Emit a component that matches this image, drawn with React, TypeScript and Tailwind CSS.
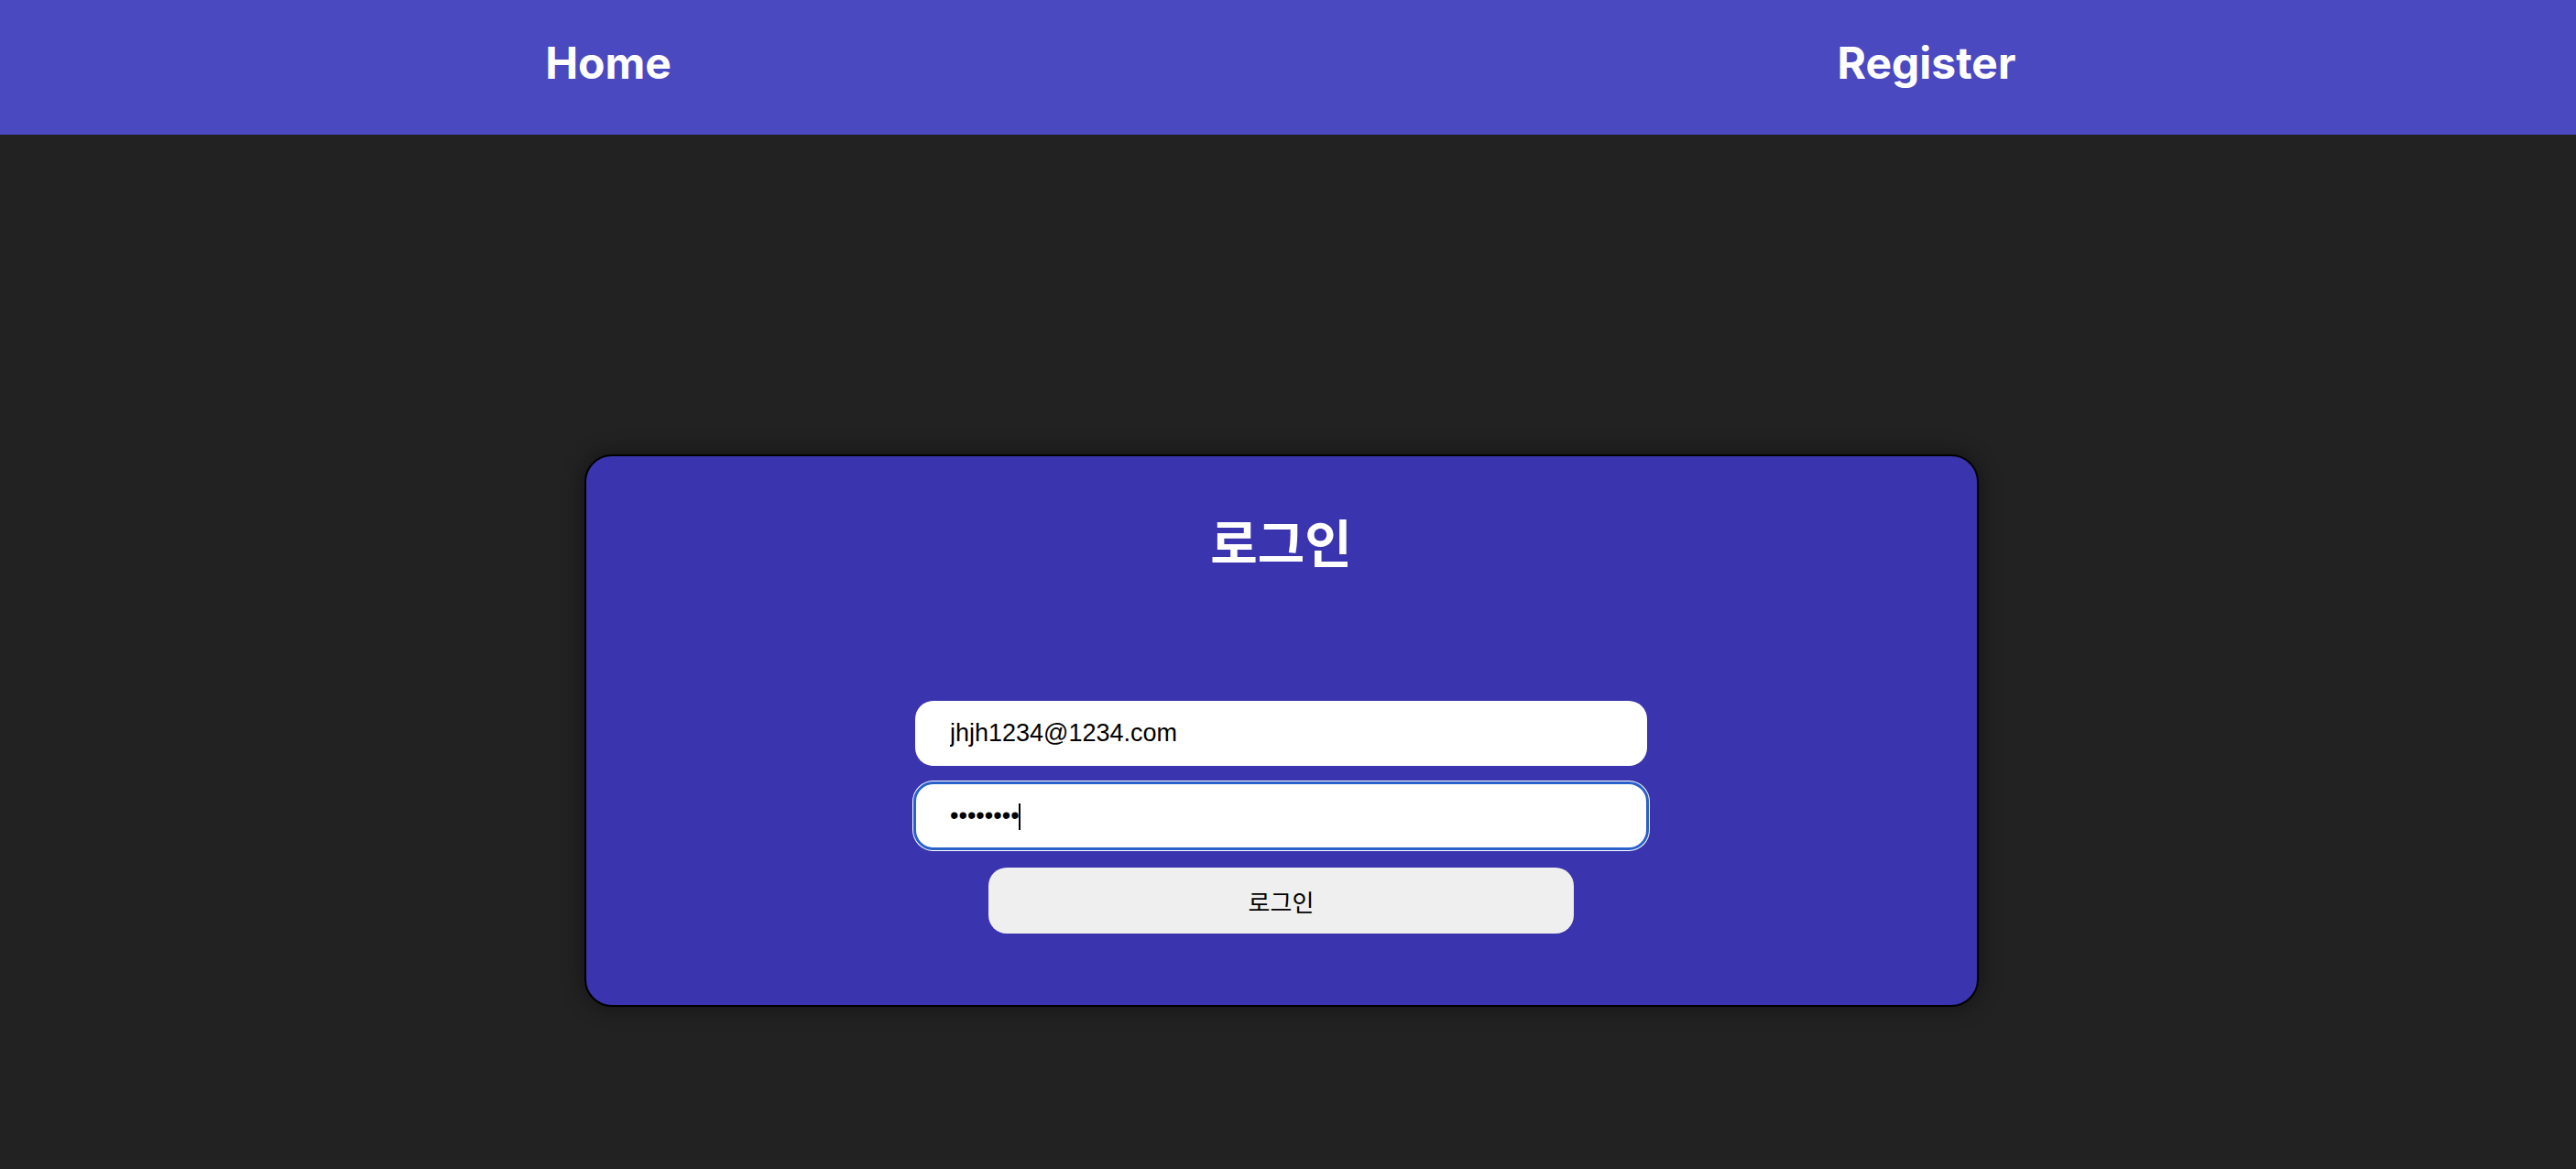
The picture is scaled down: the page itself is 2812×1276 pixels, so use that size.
import React from "react";

export default function App() {
  return (
    <div className="w-full min-h-[1276px] bg-[#222222] flex flex-col">
      <nav className="h-[147px] pb-[10px] bg-[#4b49c0] grid grid-cols-2 items-center font-['Inter',sans-serif] font-bold text-white text-[48px]">
        <div className="flex justify-center pr-[78px]">
          <a href="#" className="leading-none">Home</a>
        </div>
        <div className="flex justify-center pr-[12px]">
          <a href="#" className="leading-none">Register</a>
        </div>
      </nav>
      <main className="flex justify-center pr-[15px] pt-[349px]">
        <div className="w-[1522px] h-[603px] border-2 border-black rounded-[30px] bg-[#3a34ae] shadow-[0_0_24px_rgba(0,0,0,0.45)] flex flex-col items-center">
          <h1 className="mt-[64px] text-white text-[56px] leading-none font-bold font-['Noto_Sans_CJK_KR',sans-serif]">
            로그인
          </h1>
          <form className="mt-[147px] flex flex-col items-center" onSubmit={(e) => e.preventDefault()}>
            <input
              type="email"
              defaultValue="jhjh1234@1234.com"
              className="w-[799px] h-[71px] rounded-[20px] bg-white pl-[38px] text-[27px] text-black font-['Liberation_Sans',sans-serif] outline-none"
            />
            <div className="relative mt-[19px]">
              <input
                type="password"
                defaultValue="12345678"
                className="w-[799px] h-[71px] rounded-[20px] bg-white pl-[38px] text-[27px] text-black font-['Liberation_Sans',sans-serif] outline-[3px] outline-solid outline-[#2a60ca] outline-offset-[-1px] shadow-[0_0_0_3px_#ffffff] caret-transparent"
              />
              <span className="absolute left-[113px] top-[22px] w-[2px] h-[29px] bg-black" />
            </div>
            <button
              type="submit"
              className="mt-[21px] w-[639px] h-[72px] rounded-[20px] bg-[#efefef] text-black text-[26px] font-['Noto_Sans_CJK_KR',sans-serif]"
            >
              로그인
            </button>
          </form>
        </div>
      </main>
    </div>
  );
}
